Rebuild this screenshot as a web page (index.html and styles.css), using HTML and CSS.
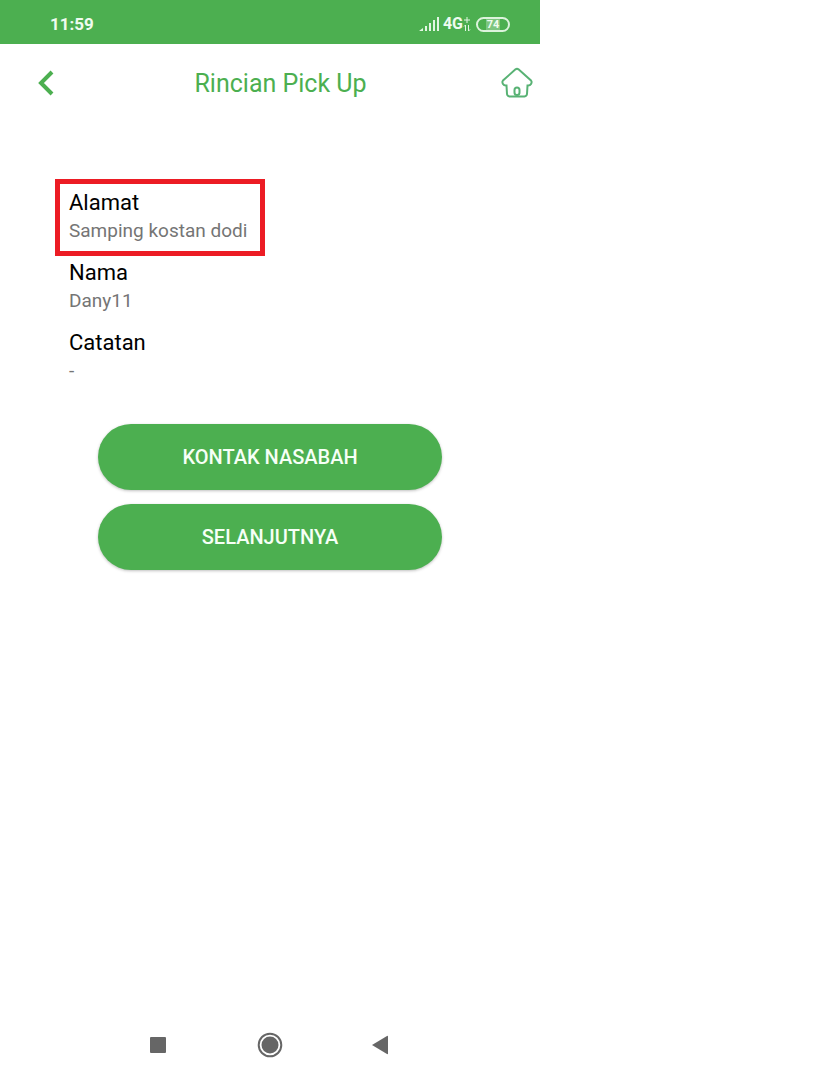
FILE: index.html
```html
<!DOCTYPE html>
<html lang="id">
<head>
<meta charset="utf-8">
<meta name="viewport" content="width=device-width, initial-scale=1">
<title>Rincian Pick Up</title>
<link rel="stylesheet" href="styles.css">
</head>
<body>
<div class="phone">
  <div class="status">
    <span class="clock">11:59</span>
    <div class="indicators">
      <svg class="signal" width="20" height="14" viewBox="0 0 20 14" aria-hidden="true"><path d="M0 14l4-3v3zM6 9h2v5H6zM10 6h2v8h-2zM14 3h2v11h-2zM18 0h2v14h-2z"/></svg>
      <span class="network">4G</span>
      <svg class="data" width="8" height="16" viewBox="0 0 8 16" aria-hidden="true"><path d="M1 4h6M4 1v6M2.500 15V9L1 10.500M5.500 9v6L7 13.500"/></svg>
      <span class="battery"><span class="level">74</span></span>
    </div>
  </div>
  <header class="bar">
    <button class="icon-button" type="button" aria-label="Kembali">
      <svg width="16" height="26" viewBox="0 0 16 26" aria-hidden="true"><path class="chevron" d="M14 2L3 13l11 11"/></svg>
    </button>
    <h1 class="title">Rincian Pick Up</h1>
    <button class="icon-button" type="button" aria-label="Beranda">
      <svg width="32" height="32" viewBox="0 0 32 32" aria-hidden="true"><path class="house" d="M14.500 2.300q1.500-1 3 0L30 13.500q1.200 1.500 0 3.500-1 1.800-3.500 1.500L26 27q-.2 2.200-2.500 2.500H8.500Q6.200 29.200 6 27l-.5-8.500Q3 18.800 2 17q-1.200-2 0-3.500z"/><rect class="house" x="13.500" y="20.500" width="5" height="7.500" rx="2.500"/></svg>
    </button>
  </header>
  <main class="content">
    <dl class="fields">
      <div class="field highlight"><dt>Alamat</dt><dd>Samping kostan dodi</dd></div>
      <div class="field"><dt>Nama</dt><dd>Dany11</dd></div>
      <div class="field"><dt>Catatan</dt><dd>-</dd></div>
    </dl>
    <div class="actions">
      <button class="action" type="button">KONTAK NASABAH</button>
      <button class="action" type="button">SELANJUTNYA</button>
    </div>
  </main>
  <nav class="system">
    <button class="key" type="button" aria-label="Aplikasi terbaru"><svg width="26" height="26" viewBox="0 0 26 26" aria-hidden="true"><rect x="4" y="5" width="16" height="16" rx="1"/></svg></button>
    <button class="key" type="button" aria-label="Layar utama"><svg width="26" height="26" viewBox="0 0 26 26" aria-hidden="true"><circle cx="13" cy="13" r="8.500"/><circle class="ring" cx="13" cy="13" r="11.300"/></svg></button>
    <button class="key" type="button" aria-label="Kembali ke layar sebelumnya"><svg width="26" height="26" viewBox="0 0 26 26" aria-hidden="true"><path d="M4 13L19 4q1-.5 1 .5v17q0 1-1 .5z"/></svg></button>
  </nav>
</div>
</body>
</html>
```
FILE: styles.css
```css
* {
  box-sizing: border-box;
}

body {
  margin: 0;
  background: #fff;
  font-family: Roboto, "Liberation Sans", sans-serif;
}

button {
  margin: 0;
  padding: 0;
  border: 0;
  background: none;
  font-family: inherit;
  cursor: pointer;
}

svg {
  display: block;
}

.phone {
  display: flex;
  flex-direction: column;
  max-width: 540px;
  min-height: 100vh;
}

.status {
  display: flex;
  align-items: center;
  justify-content: space-between;
  padding: 12px 30px 8px 50px;
  background: #4caf50;
  color: #effbef;
  font-weight: 700;
  line-height: 24px;
}

.clock {
  font-size: 17px;
}

.indicators {
  display: flex;
  align-items: center;
}

.signal {
  fill: #e3f6e3;
}

.network {
  margin-left: 4px;
  font-size: 16px;
}

.data {
  fill: none;
  stroke: #e3f6e3;
}

.battery {
  display: flex;
  width: 34px;
  height: 15px;
  margin-left: 5px;
  padding: 0 8px;
  border: 2px solid #dcf3dc;
  border-radius: 8px;
}

.level {
  flex: 1;
  background: #7cc57f;
  font-size: 11px;
  line-height: 12px;
  text-align: center;
}

.bar {
  display: flex;
  align-items: center;
  justify-content: space-between;
  height: 78px;
  padding: 0 7px 0 38px;
}

.title {
  flex: 1;
  margin: 0;
  padding: 2px 0 0 6px;
  color: #4caf50;
  font-size: 25px;
  font-weight: 400;
  line-height: 32px;
  text-align: center;
}

.chevron {
  fill: none;
  stroke: #4caf50;
  stroke-width: 4;
}

.house {
  fill: none;
  stroke: #58b274;
  stroke-width: 2;
}

.content {
  flex: 1;
  padding-top: 57px;
}

.fields {
  display: flex;
  flex-direction: column;
  align-items: flex-start;
  margin: 0;
  padding-left: 55px;
}

.field {
  padding: 3px 14px 11px;
  line-height: 28px;
}

.highlight {
  padding: 5px 13px 6px 9px;
  border: 5px solid #ec1c24;
}

.field dt {
  color: #000;
  font-size: 22px;
}

.field dd {
  margin: 0;
  color: #757575;
  font-size: 19px;
}

.actions {
  display: flex;
  flex-direction: column;
  gap: 14px;
  padding: 28px 98px;
}

.action {
  height: 66px;
  border-radius: 33px;
  background: #4caf50;
  box-shadow: 0 1px 3px rgba(0, 0, 0, 0.25);
  color: #f6fff6;
  font-size: 20px;
  font-weight: 500;
}

.system {
  display: flex;
  justify-content: center;
  gap: 85px;
  padding: 20px;
}

.key {
  fill: #666;
}

.ring {
  fill: none;
  stroke: #666;
  stroke-width: 2;
}
```
